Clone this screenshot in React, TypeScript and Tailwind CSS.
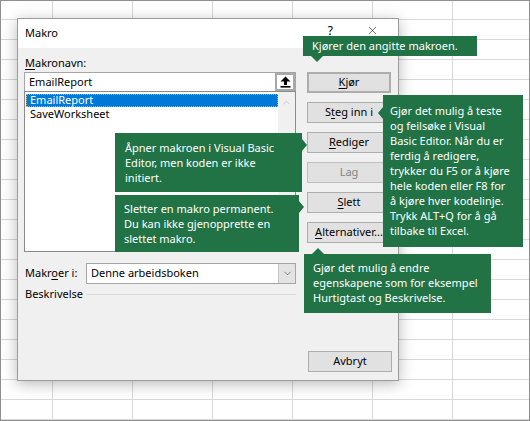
import { ChevronDown, ChevronUp, X } from 'lucide-react';

const sheetRows = Array.from({ length: 22 });
const sheetCols = Array.from({ length: 7 });

const Acc = ({ pre = '', k, post = '' }: { pre?: string; k: string; post?: string }) => (
  <span>
    {pre}
    <span className="underline underline-offset-2">{k}</span>
    {post}
  </span>
);

const Btn = ({ children, className = '' }: { children: React.ReactNode; className?: string }) => (
  <div
    className={`flex h-[21px] w-[84px] shrink-0 items-center justify-center border border-[#adadad] bg-[#e1e1e1] ${className}`}
  >
    {children}
  </div>
);

const UploadArrow = () => (
  <svg width="11" height="12" viewBox="0 0 11 12">
    <polygon points="5.5,0.5 0.5,5.5 10.5,5.5" fill="#000" />
    <rect x="4" y="5" width="3" height="4" fill="#000" />
    <rect x="0.5" y="10" width="10" height="1.6" fill="#000" />
  </svg>
);

export default function App() {
  return (
    <div className="relative h-[421px] w-[530px] overflow-hidden border border-[#8f8f8f] bg-white font-['Segoe_UI','Noto_Sans',sans-serif] text-[11px] text-black">
      {/* worksheet grid behind the dialog */}
      <div className="flex flex-col">
        {sheetRows.map((_, r) => (
          <div key={r} className={`flex shrink-0 ${r === 0 ? 'h-[19px]' : 'h-[20px]'}`}>
            {sheetCols.map((_, c) => (
              <div
                key={c}
                className={`shrink-0 border-b border-r border-[#d9d9d9] ${c === 0 ? 'w-[52px]' : 'w-[80px]'}`}
              />
            ))}
          </div>
        ))}
      </div>

      {/* Makro dialog */}
      <div className="absolute left-[16px] top-[17px] flex h-[363px] w-[382px] flex-col border border-[#9b9b9b] bg-[#f0f0f0] shadow-[0_3px_14px_rgba(0,0,0,0.28)]">
        <div className="flex h-[29px] shrink-0 items-center bg-white pl-[7px] pr-[19px]">
          <span className="text-[11px]">Makro</span>
          <div className="ml-auto flex items-center gap-[33px]">
            <span className="-mt-[6px] text-[12px]">?</span>
            <X size={13} strokeWidth={1} className="-mt-[6px]" />
          </div>
        </div>

        <div className="flex flex-1 flex-col px-[6px] pb-[8px] pt-[8px]">
          <div className="h-[14px] pl-px leading-[14px]">
            <Acc k="M" post="akronavn:" />
          </div>

          <div className="mt-[2px] flex gap-[11px]">
            <div className="flex w-[272px] flex-col">
              <div className="flex h-[20px] border border-[#a5a5a5] bg-white">
                <div className="flex flex-1 items-center pl-[4px]">EmailReport</div>
                <div className="flex w-[20px] items-center justify-center border-2 border-[#a9a9a9] bg-white">
                  <UploadArrow />
                </div>
              </div>
              <div className="-mt-px flex h-[161px] border border-[#8a8a8a] bg-white">
                <div className="flex flex-1 flex-col pl-px pt-[2px]">
                  <div className="flex h-[13px] items-center border border-dotted border-[#f3a33c] bg-[#0078d7] pl-[3px] text-white">
                    EmailReport
                  </div>
                  <div className="flex h-[14px] items-center pl-[4px]">SaveWorksheet</div>
                </div>
                <div className="flex w-[17px] justify-center bg-[#f0f0f0] pt-[5px]">
                  <ChevronUp size={11} strokeWidth={2} className="text-[#c4c4c4]" />
                </div>
              </div>
            </div>

            <div className="flex flex-col gap-[9px]">
              <Btn className="border-2 border-[#0078d7]">
                <Acc k="K" post="jør" />
              </Btn>
              <Btn>
                <Acc pre="S" k="t" post="eg inn i" />
              </Btn>
              <Btn>
                <Acc k="R" post="ediger" />
              </Btn>
              <Btn className="border-[#bfbfbf] bg-[#cccccc] text-[#838383]">Lag</Btn>
              <Btn>
                <Acc k="S" post="lett" />
              </Btn>
              <Btn>
                <Acc k="A" post="lternativer..." />
              </Btn>
            </div>
          </div>

          <div className="mt-[11px] flex h-[21px] w-[272px] items-center">
            <div className="w-[62px] pl-px">
              <Acc pre="Makr" k="o" post="er i:" />
            </div>
            <div className="flex h-full flex-1 border border-[#a5a5a5] bg-white">
              <div className="flex flex-1 items-center pl-[4px]">Denne arbeidsboken</div>
              <div className="flex w-[17px] items-center justify-center border-l border-[#c2c2c2] bg-[#e3e3e3]">
                <ChevronDown size={11} strokeWidth={1.5} className="text-[#555]" />
              </div>
            </div>
          </div>

          <div className="mt-[3px] flex h-[14px] w-[272px] items-center">
            <div className="w-[62px] pl-px">Beskrivelse</div>
            <div className="h-px flex-1 bg-[#dcdcdc]" />
          </div>

          <div className="mt-auto flex justify-end">
            <Btn className="w-[74px]">Avbryt</Btn>
          </div>
        </div>
      </div>

      {/* callouts */}
      <div className="absolute left-[302px] top-[35px] h-[20px] w-[174px] whitespace-nowrap bg-[#217346] pl-[9px] leading-[20px] text-white">
        Kjører den angitte makroen.
        <div className="absolute left-[8px] top-full border-x-[6px] border-t-[6px] border-x-transparent border-t-[#217346]" />
      </div>

      <div className="absolute left-[382px] top-[94px] h-[152px] w-[140px] whitespace-nowrap bg-[#217346] pl-[7px] pt-[8px] leading-[15px] text-white">
        Gjør det mulig å teste
        <br />
        og feilsøke i Visual
        <br />
        Basic Editor. Når du er
        <br />
        ferdig å redigere,
        <br />
        trykker du F5 or å kjøre
        <br />
        hele koden eller F8 for
        <br />
        å kjøre hver kodelinje.
        <br />
        Trykk ALT+Q for å gå
        <br />
        tilbake til Excel.
        <div className="absolute right-full top-[12px] border-y-[6px] border-r-[5px] border-y-transparent border-r-[#217346]" />
      </div>

      <div className="absolute left-[114px] top-[132px] h-[59px] w-[187px] whitespace-nowrap bg-[#217346] pl-[10px] pt-[7px] leading-[15px] text-white">
        Åpner makroen i Visual Basic
        <br />
        Editor, men koden er ikke
        <br />
        initiert.
        <div className="absolute left-full top-[6px] border-y-[6px] border-l-[5px] border-y-transparent border-l-[#217346]" />
      </div>

      <div className="absolute left-[114px] top-[194px] h-[57px] w-[184px] whitespace-nowrap bg-[#217346] pl-[9px] pt-[6px] leading-[15px] text-white">
        Sletter en makro permanent.
        <br />
        Du kan ikke gjenopprette en
        <br />
        slettet makro.
        <div className="absolute left-full top-[6px] border-y-[6px] border-l-[5px] border-y-transparent border-l-[#217346]" />
      </div>

      <div className="absolute left-[303px] top-[253px] h-[59px] w-[187px] whitespace-nowrap bg-[#217346] pl-[9px] pt-[6px] leading-[15px] text-white">
        Gjør det mulig å endre
        <br />
        egenskapene som for eksempel
        <br />
        Hurtigtast og Beskrivelse.
        <div className="absolute bottom-full left-[8px] border-x-[6px] border-b-[6px] border-x-transparent border-b-[#217346]" />
      </div>
    </div>
  );
}
